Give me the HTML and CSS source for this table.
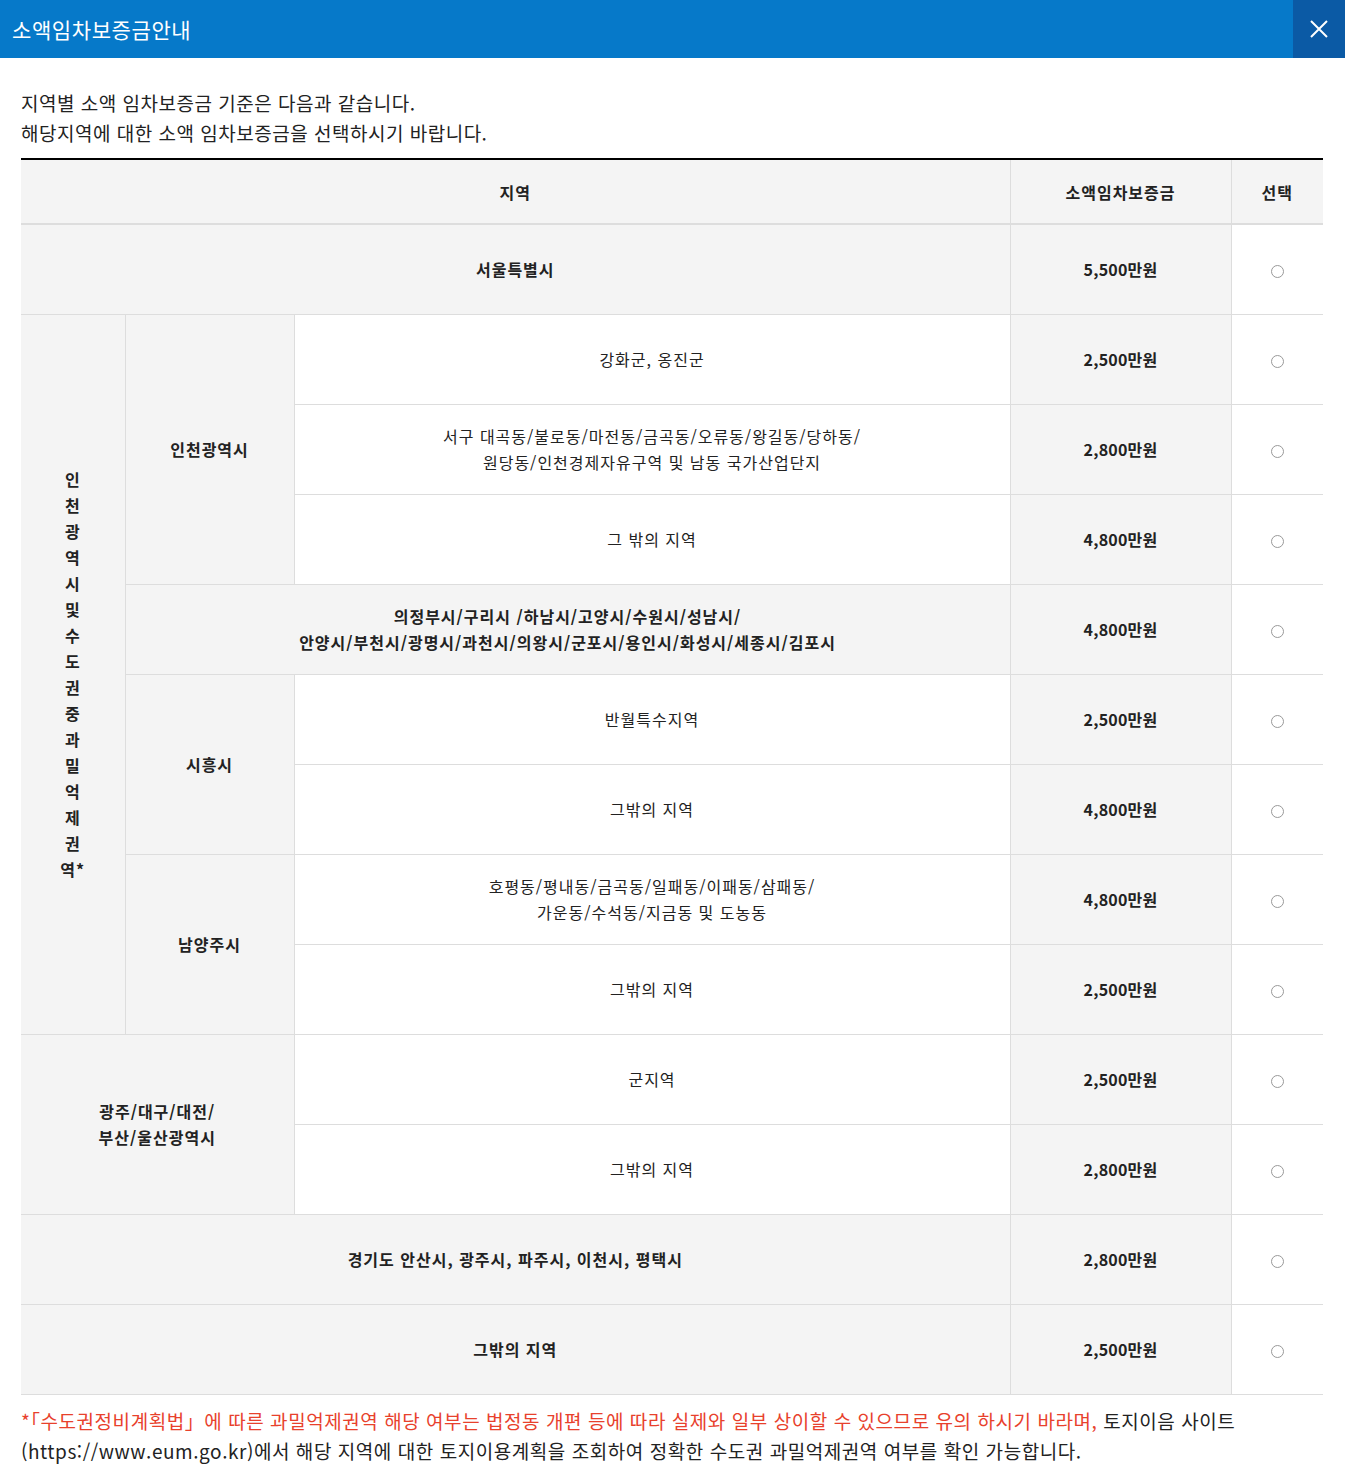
FILE: index.html
```html
<!DOCTYPE html>
<html lang="ko">
<head>
<meta charset="utf-8">
<title>소액임차보증금안내</title>
<link rel="stylesheet" href="styles.css">
</head>
<body>
<div class="modal">
  <header class="modal-head">
    <h1 class="modal-title">소액임차보증금안내</h1>
    <button class="close-btn" type="button" aria-label="닫기">
      <svg width="18" height="18" viewBox="0 0 18 18"><path d="M1 1L17 17M17 1L1 17" stroke="#fff" stroke-width="2" fill="none"/></svg>
    </button>
  </header>
  <div class="modal-body">
    <p class="intro">지역별 소액 임차보증금 기준은 다음과 같습니다.<br>해당지역에 대한 소액 임차보증금을 선택하시기 바랍니다.</p>
    <table class="deposit-table">
      <colgroup>
        <col class="c1"><col class="c2"><col class="c3"><col class="c4"><col class="c5">
      </colgroup>
      <thead>
        <tr><th colspan="3">지역</th><th>소액임차보증금</th><th>선택</th></tr>
      </thead>
      <tbody>
        <tr><td colspan="3" class="label">서울특별시</td><td class="amount">5,500만원</td><td class="sel"><input type="radio" name="dep"></td></tr>
        <tr>
          <td rowspan="8" class="label vert">인<br>천<br>광<br>역<br>시<br>및<br>수<br>도<br>권<br>중<br>과<br>밀<br>억<br>제<br>권<br>역*</td>
          <td rowspan="3" class="label">인천광역시</td>
          <td class="desc">강화군, 옹진군</td><td class="amount">2,500만원</td><td class="sel"><input type="radio" name="dep"></td>
        </tr>
        <tr><td class="desc">서구 대곡동/불로동/마전동/금곡동/오류동/왕길동/당하동/<br>원당동/인천경제자유구역 및 남동 국가산업단지</td><td class="amount">2,800만원</td><td class="sel"><input type="radio" name="dep"></td></tr>
        <tr><td class="desc">그 밖의 지역</td><td class="amount">4,800만원</td><td class="sel"><input type="radio" name="dep"></td></tr>
        <tr><td colspan="2" class="label">의정부시/구리시 /하남시/고양시/수원시/성남시/<br>안양시/부천시/광명시/과천시/의왕시/군포시/용인시/화성시/세종시/김포시</td><td class="amount">4,800만원</td><td class="sel"><input type="radio" name="dep"></td></tr>
        <tr><td rowspan="2" class="label">시흥시</td><td class="desc">반월특수지역</td><td class="amount">2,500만원</td><td class="sel"><input type="radio" name="dep"></td></tr>
        <tr><td class="desc">그밖의 지역</td><td class="amount">4,800만원</td><td class="sel"><input type="radio" name="dep"></td></tr>
        <tr><td rowspan="2" class="label">남양주시</td><td class="desc">호평동/평내동/금곡동/일패동/이패동/삼패동/<br>가운동/수석동/지금동 및 도농동</td><td class="amount">4,800만원</td><td class="sel"><input type="radio" name="dep"></td></tr>
        <tr><td class="desc">그밖의 지역</td><td class="amount">2,500만원</td><td class="sel"><input type="radio" name="dep"></td></tr>
        <tr><td colspan="2" rowspan="2" class="label">광주/대구/대전/<br>부산/울산광역시</td><td class="desc">군지역</td><td class="amount">2,500만원</td><td class="sel"><input type="radio" name="dep"></td></tr>
        <tr><td class="desc">그밖의 지역</td><td class="amount">2,800만원</td><td class="sel"><input type="radio" name="dep"></td></tr>
        <tr><td colspan="3" class="label">경기도 안산시, 광주시, 파주시, 이천시, 평택시</td><td class="amount">2,800만원</td><td class="sel"><input type="radio" name="dep"></td></tr>
        <tr><td colspan="3" class="label">그밖의 지역</td><td class="amount">2,500만원</td><td class="sel"><input type="radio" name="dep"></td></tr>
      </tbody>
    </table>
    <p class="note"><span class="red"><span class="tight">*「</span>수도권정비계획법」에 따른 과밀억제권역 해당 여부는 법정동 개편 등에 따라 실제와 일부 상이할 수 있으므로 유의 하시기 바라며,</span> 토지이음 사이트<br>(https://www.eum.go.kr)에서 해당 지역에 대한 토지이용계획을 조회하여 정확한 수도권 과밀억제권역 여부를 확인 가능합니다.</p>
  </div>
</div>
</body>
</html>
```

FILE: styles.css
```css
* { box-sizing: border-box; }
html, body { margin: 0; padding: 0; background: #fff; }
body {
  font-family: "Noto Sans CJK KR", "Noto Sans", sans-serif;
  color: #222;
}
.modal-head {
  height: 58px;
  background: #0679c9;
  display: flex;
  align-items: center;
  justify-content: space-between;
}
.modal-title {
  margin: 0 0 0 12px;
  font-size: 21px;
  font-weight: 400;
  color: #fff;
  line-height: 28px;
  letter-spacing: 0.6px;
}
.close-btn {
  width: 52px;
  height: 58px;
  border: 0;
  padding: 0;
  background: #0b5aa5;
  display: flex;
  align-items: center;
  justify-content: center;
}
.modal-body {
  padding: 30px 22px 0 21px;
}
.intro {
  margin: 0 0 10px;
  font-size: 19px;
  line-height: 30px;
  color: #222;
  letter-spacing: 0.5px;
}
.deposit-table {
  width: 1302px;
  table-layout: fixed;
  border-collapse: collapse;
  border-top: 2px solid #000;
  font-size: 16px;
  color: #222;
  letter-spacing: 1px;
}
.c1 { width: 104px; }
.c2 { width: 169px; }
.c3 { width: 716px; }
.c4 { width: 221px; }
.c5 { width: 92px; }
.deposit-table th,
.deposit-table td {
  border: 1px solid #ddd;
  text-align: center;
  vertical-align: middle;
  padding: 0 4px;
  line-height: 26px;
}
.deposit-table tr > :first-child { border-left: 0; }
.deposit-table tr > :last-child { border-right: 0; }
.deposit-table th {
  height: 65px;
  background: #f4f4f4;
  font-weight: 700;
  border-bottom: 2px solid #ddd;
  border-top: 0;
}
.deposit-table td { height: 90px; }
.deposit-table td.label { background: #f4f4f4; font-weight: 700; }
.deposit-table td.vert { border-left: 0; }
.deposit-table td.desc { background: #fff; font-weight: 400; }
.deposit-table td.amount { background: #f4f4f4; font-weight: 700; letter-spacing: 0.2px; }
.deposit-table td.sel { background: #fff; border-right: 0; }
.sel input {
  appearance: none;
  -webkit-appearance: none;
  width: 13px;
  height: 13px;
  margin: 0;
  border: 1px solid #999;
  border-radius: 50%;
  background: #fff;
  vertical-align: middle;
}
.note {
  margin: 11px 0 0;
  font-size: 19px;
  line-height: 30px;
  color: #222;
  letter-spacing: 0.55px;
}
.note .red { color: #e8412c; }
.note .tight { font-feature-settings: "halt"; }
```
